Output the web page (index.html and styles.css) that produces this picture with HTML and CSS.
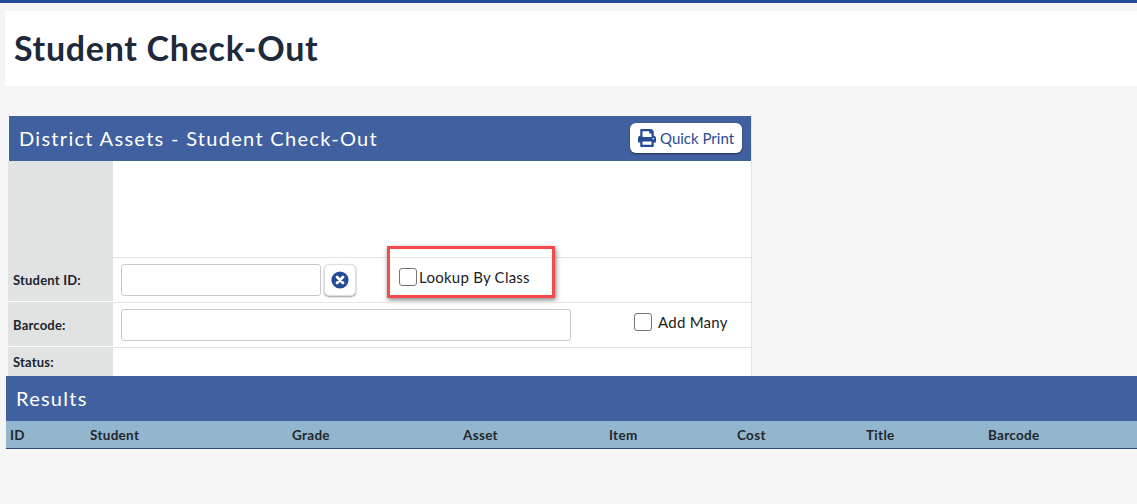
FILE: index.html
```html
<!DOCTYPE html>
<html lang="en">
<head>
    <meta charset="utf-8">
    <title>Student Check-Out</title>
    <link rel="stylesheet" href="styles.css">
</head>
<body>
    <div class="top-bar"></div>
    <div class="page-title">
        <h1>Student Check-Out</h1>
    </div>

    <div class="panel">
        <div class="panel-head">
            <span class="panel-title">District Assets - Student Check-Out</span>
            <button class="print-btn">
                <svg class="print-icon" viewBox="0 0 512 512">
                    <path fill="#264b96" d="M448 192V77.25c0-8.49-3.37-16.62-9.37-22.63L393.37 9.37c-6-6-14.14-9.37-22.63-9.37H96C78.33 0 64 14.33 64 32v160c-35.35 0-64 28.65-64 64v112c0 8.84 7.16 16 16 16h48v96c0 17.67 14.33 32 32 32h320c17.67 0 32-14.33 32-32v-96h48c8.84 0 16-7.16 16-16V256c0-35.35-28.65-64-64-64zm-64 256H128v-96h256v96zm0-224H128V64h192v48c0 8.84 7.16 16 16 16h48v96zm48 72c-13.25 0-24-10.75-24-24 0-13.26 10.75-24 24-24s24 10.74 24 24c0 13.25-10.75 24-24 24z"/>
                </svg>
                Quick Print
            </button>
        </div>
        <div class="form-row row-blank">
            <div class="label-cell"></div>
            <div class="value-cell"></div>
        </div>
        <div class="form-row row-field">
            <div class="label-cell">Student ID:</div>
            <div class="value-cell">
                <input class="text-input id-input" type="text">
                <button class="clear-btn">
                    <svg viewBox="0 0 18 18" width="18" height="18">
                        <circle cx="9" cy="9" r="8.6" fill="#264b96"/>
                        <path d="M6 6l6 6M12 6l-6 6" stroke="#fff" stroke-width="2.8" stroke-linecap="round"/>
                    </svg>
                </button>
                <div class="lookup-box">
                    <span class="check"></span>
                    <span class="check-label">Lookup By Class</span>
                </div>
            </div>
        </div>
        <div class="form-row row-field">
            <div class="label-cell">Barcode:</div>
            <div class="value-cell">
                <input class="text-input barcode-input" type="text">
                <div class="add-many">
                    <span class="check"></span>
                    <span class="check-label">Add Many</span>
                </div>
            </div>
        </div>
        <div class="form-row row-status">
            <div class="label-cell">Status:</div>
            <div class="value-cell"></div>
        </div>
    </div>

    <div class="results">
        <div class="results-head">Results</div>
        <div class="results-cols">
            <span class="col col-id">ID</span>
            <span class="col col-student">Student</span>
            <span class="col col-grade">Grade</span>
            <span class="col col-asset">Asset</span>
            <span class="col col-item">Item</span>
            <span class="col col-cost">Cost</span>
            <span class="col col-title">Title</span>
            <span class="col col-barcode">Barcode</span>
        </div>
    </div>
</body>
</html>
```

FILE: styles.css
```css
body {
    margin: 0;
    background-color: #f5f5f5;
    font-family: Lato, "Open Sans", sans-serif;
    color: #1c2430;
}

.top-bar {
    height: 3px;
    background: #264b96;
}

.page-title {
    box-sizing: border-box;
    margin: 8px 0 30px 5px;
    height: 75px;
    padding-bottom: 3px;
    background: #fff;
    display: flex;
    align-items: center;
}
.page-title h1 {
    margin: 0 0 0 9px;
    font-size: 34px;
    font-weight: 700;
    letter-spacing: 0.7px;
    color: #1d2a3c;
}

.panel {
    margin-left: 8px;
    width: 743px;
    background: #fff;
    border-right: 1px solid #e4e4e4;
}

.panel-head {
    box-sizing: border-box;
    margin-left: 1px;
    height: 45px;
    background: #4160a0;
    display: flex;
    align-items: center;
    justify-content: space-between;
    padding: 0 9px 2px 10px;
}
.panel-title {
    color: #fff;
    font-size: 20px;
    letter-spacing: 1.3px;
}

.print-btn {
    height: 30px;
    width: 112px;
    padding: 0 0 0 8px;
    background: #fff;
    border: none;
    border-radius: 6px;
    box-shadow: 0 1px 2px rgba(0, 0, 0, 0.5);
    color: #264b96;
    font-family: inherit;
    font-size: 15px;
    display: flex;
    align-items: center;
    gap: 4px;
}
.print-icon {
    width: 18px;
    height: 18px;
}

.form-row {
    display: flex;
}
.label-cell {
    width: 100px;
    padding-left: 5px;
    background: #e1e3e2;
    font-size: 13px;
    font-weight: 700;
    letter-spacing: 0.2px;
    display: flex;
    align-items: center;
    flex-shrink: 0;
}
.value-cell {
    flex: 1;
    position: relative;
    display: flex;
    align-items: center;
    padding-left: 8px;
}
.row-blank {
    height: 96px;
}
.row-field {
    height: 44px;
}
.row-field .label-cell {
    padding-top: 1px;
    height: 43px;
}
.row-field .value-cell,
.row-status .value-cell {
    border-top: 1px solid #e4e4e4;
}
.row-status {
    height: 29px;
}
.row-field + .row-field,
.row-status {
    margin-top: 1px;
}
.row-status .label-cell {
    padding-top: 1px;
}

.text-input {
    box-sizing: border-box;
    height: 32px;
    border: 1px solid #c9c9c9;
    border-radius: 3px;
    background: #fff;
    margin: 0;
}
.id-input {
    width: 200px;
}
.barcode-input {
    width: 450px;
}

.clear-btn {
    box-sizing: border-box;
    width: 32px;
    height: 32px;
    margin-left: 3px;
    padding: 0;
    background: #fff;
    border: 1px solid #ddd;
    border-radius: 5px;
    box-shadow: 0 1px 2px rgba(0, 0, 0, 0.4);
    display: flex;
    align-items: center;
    justify-content: center;
}

.check {
    box-sizing: border-box;
    display: block;
    width: 18px;
    height: 18px;
    background: #fff;
    border: 1px solid #767676;
    border-radius: 3px;
}
.check-label {
    font-size: 15px;
    letter-spacing: 0.25px;
    color: #1c1c1c;
}

/* callout drawn over the form */
.lookup-box {
    position: absolute;
    left: 274px;
    top: -12px;
    box-sizing: border-box;
    width: 168px;
    height: 52px;
    border: 3px solid #f44a4d;
    box-shadow: 1px 2px 5px rgba(0, 0, 0, 0.5);
    display: flex;
    align-items: center;
    padding: 10px 0 0 9px;
    gap: 2px;
}

.add-many {
    position: absolute;
    left: 521px;
    top: 10px;
    display: flex;
    align-items: center;
    gap: 6px;
}

.results {
    margin-left: 6px;
}
.results-head {
    height: 45px;
    line-height: 45px;
    padding-left: 10px;
    background: #4160a0;
    color: #fff;
    font-size: 20px;
    letter-spacing: 1.25px;
}
.results-cols {
    box-sizing: border-box;
    height: 28px;
    background: #92b6cd;
    border-bottom: 1px solid #2f4a78;
    font-size: 13.5px;
    font-weight: 700;
    letter-spacing: 0.3px;
    color: #22262c;
    display: flex;
    align-items: center;
}
.col {
    flex-shrink: 0;
}
.col-id { width: 80px; padding-left: 4px; }
.col-student { width: 202px; }
.col-grade { width: 171px; }
.col-asset { width: 146px; }
.col-item { width: 128px; }
.col-cost { width: 129px; }
.col-title { width: 122px; }
```
